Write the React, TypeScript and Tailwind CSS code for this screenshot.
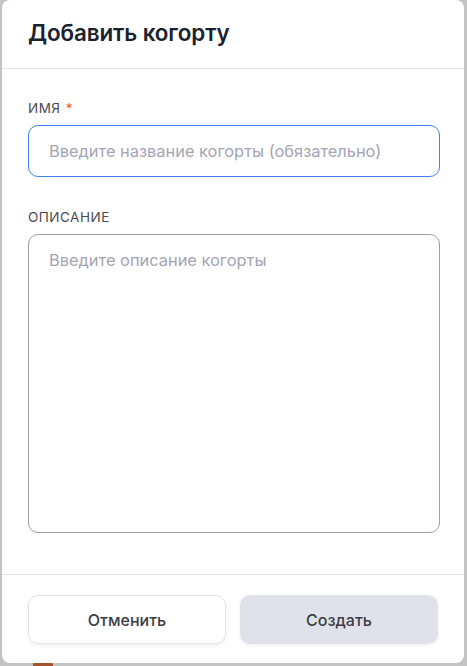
import React from "react";

export default function App() {
  return (
    <div
      className="relative w-[467px] h-[666px] overflow-hidden bg-[#c3c3c3]"
      style={{ fontFamily: "Inter, 'Noto Sans', sans-serif" }}
    >
      <div className="absolute left-[33px] top-[662px] w-[20px] h-[10px] rounded-[3px] bg-[#a4532c]" />
      <div className="relative ml-[2px] w-[462px] h-[663px] bg-white rounded-[8px] flex flex-col">
        <div className="h-[69px] border-b border-[#e2e4ea] flex items-center px-[26px]">
          <h2 className="text-[22.4px] font-semibold text-[#1a2230] tracking-[-0.1px] pb-[3px]">
            Добавить когорту
          </h2>
        </div>
        <div className="flex-1 px-[26px] pt-[30px] border-b border-[#e2e4ea]">
          <div className="text-[13.5px] text-[#4b4b52] tracking-[0.5px] uppercase leading-[18px]">
            Имя <span className="text-[#ee5a36] ml-[1px]">*</span>
          </div>
          <div className="mt-[8px] h-[52px] w-[412px] rounded-[10px] border border-[#3c82f0] flex items-center px-[20px]">
            <span className="text-[16.4px] text-[#a4a4b4]">
              Введите название когорты (обязательно)
            </span>
          </div>
          <div className="mt-[31px] text-[13.5px] text-[#4b4b52] tracking-[0.5px] uppercase leading-[18px]">
            Описание
          </div>
          <div className="mt-[8px] h-[299px] w-[412px] rounded-[10px] border border-[#9d9dab] px-[20px] pt-[13px]">
            <span className="text-[16.4px] text-[#a4a4b4]">
              Введите описание когорты
            </span>
          </div>
        </div>
        <div className="h-[88px] px-[26px] pt-[20px] flex gap-[14px]">
          <button className="w-[199px] h-[49px] rounded-[10px] bg-white border border-[#e2e4ea] shadow-[0_2px_4px_rgba(0,0,0,0.06)] text-[16px] font-medium text-[#3c3c42]">
            Отменить
          </button>
          <button className="w-[199px] h-[49px] rounded-[10px] bg-[#dfe2e9] shadow-[0_2px_4px_rgba(0,0,0,0.06)] text-[16px] font-medium text-[#3c3c42]">
            Создать
          </button>
        </div>
      </div>
    </div>
  );
}
